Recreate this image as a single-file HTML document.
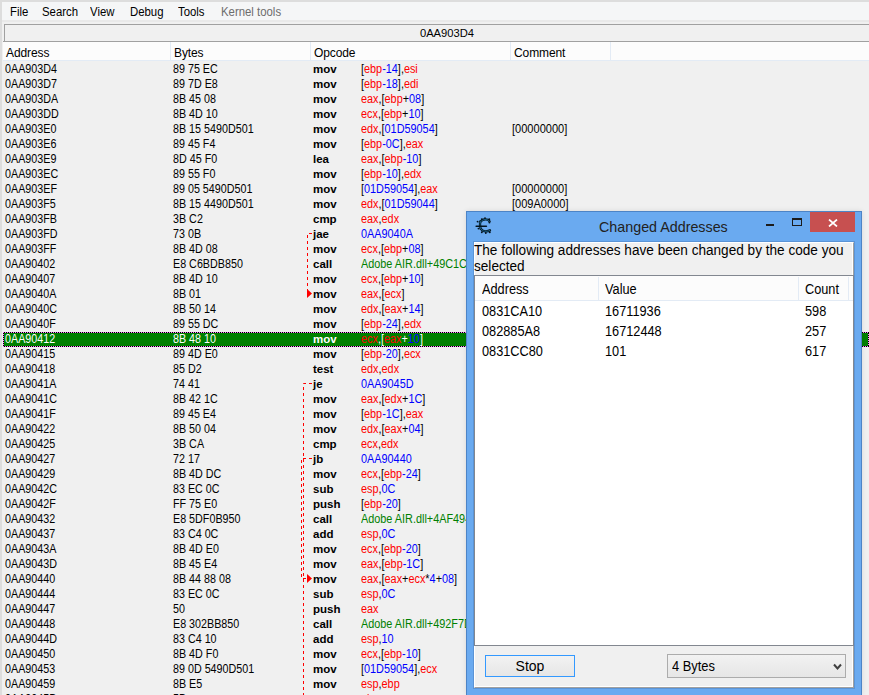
<!DOCTYPE html>
<html><head><meta charset="utf-8">
<style>
*{box-sizing:border-box}
html,body{margin:0;padding:0}
body{width:869px;height:695px;overflow:hidden;position:relative;background:#f0f0f0;font-family:"Liberation Sans",sans-serif;}
.abs{position:absolute}
#frameL{left:0;top:0;width:2px;height:695px;background:#dddddd}
#frameT{left:0;top:0;width:869px;height:2px;background:#dddddd}
#menu{left:2px;top:2px;width:867px;height:18px;background:#f5f6f7}
#menu span{position:absolute;top:2px;font-size:12.5px;line-height:16px;color:#000;transform:scaleX(0.91);transform-origin:0 0}
#menu span.dis{color:#6d6d6d}
#mline{left:2px;top:20px;width:867px;height:2px;background:#e9e9e9}
#edit{left:4px;top:24px;width:865px;height:17px;border-top:1px solid #a0a0a0;border-left:1px solid #a0a0a0;background:#f0f0f0}
#editb{left:3px;top:41px;width:866px;height:1px;background:#a0a0a0}
#edittxt{left:0;top:26px;width:869px;text-align:center;padding-left:25px;font-size:11.2px;line-height:14px;color:#000}
#hdr{left:3px;top:42px;width:866px;height:19px;background:#fcfcfc;border-bottom:1px solid #e3ebf5}
#hdr span{position:absolute;top:4px;font-size:12px;line-height:14px;color:#000;letter-spacing:-0.1px}
.hsep{position:absolute;top:0;width:1px;height:19px;background:#e3ebf5}
.row{position:absolute;left:3px;width:866px;height:15px;font-size:12px;line-height:15px;color:#000;white-space:nowrap}
.row span{position:absolute;top:0px}
.ca{left:2px;transform:scaleX(0.895);transform-origin:0 0}
.cb{left:170px;transform:scaleX(0.895);transform-origin:0 0}
.co{left:310px;font-weight:bold;font-size:11.5px}
.cp{left:358px;transform:scaleX(0.905);transform-origin:0 0}
.cc{left:509px;transform:scaleX(0.92);transform-origin:0 0}
b{font-weight:normal}
.r{color:#ff0000}.n{color:#0000ff}.g{color:#008000}.k{color:#000}
.sel{background:#008000;color:#fff}
.sel::before{content:"";position:absolute;left:0;top:0;right:0;bottom:0;background:repeating-linear-gradient(90deg,#ff80ff 0 1px,#000 1px 2px) left top/100% 1px no-repeat,repeating-linear-gradient(90deg,#ff80ff 0 1px,#000 1px 2px) left bottom/100% 1px no-repeat,repeating-linear-gradient(180deg,#ff80ff 0 1px,#000 1px 2px) left top/1px 100% no-repeat,repeating-linear-gradient(180deg,#ff80ff 0 1px,#000 1px 2px) right top/1px 100% no-repeat}
.sel .k{color:#fff}
#jumps{left:0;top:0}
/* dialog */
#dlg{left:466px;top:211px;width:396px;height:484px;background:#6aaaf0;border:1px solid #4d84c6;border-bottom:none;box-shadow:0 0 5px rgba(0,0,0,0.10)}
#dlgtitle{left:599px;top:218px;font-size:14.3px;line-height:18px;color:#222}
#close{left:810px;top:212px;width:45px;height:20px;background:#c75050}
#client{left:474px;top:242px;width:380px;height:446px;background:#f0f0f0;border-left:1px solid #fff;border-top:1px solid #fff;border-right:1px solid #a0a0a0;border-bottom:1px solid #a0a0a0;box-shadow:0 0 0 1px #5b94d6, inset -1px -1px 0 #fff}
#msg{left:474px;top:242px;width:392px;font-size:14px;line-height:16px;transform:scaleX(0.971);transform-origin:0 0;color:#000}
#lv{left:474px;top:275px;width:380px;height:371px;background:#fff;border:1px solid #828790;border-right:1px solid #828790}
#lvh{left:475px;top:276px;width:378px;height:25px;background:#fcfcfc;border-bottom:1px solid #e3ebf5}
#lvh span, .lr span{position:absolute;font-size:14px;line-height:15px;color:#000;transform:scaleX(0.91);transform-origin:0 0}
.lr{position:absolute;left:475px;width:378px;height:20px}
#stop{left:485px;top:655px;width:90px;height:22px;border:1px solid #3399ff;background:linear-gradient(#f2f2f2,#e6e6e6);font-size:14px;line-height:20px;text-align:center;color:#000}
#combo{left:667px;top:654px;width:179px;height:24px;border:1px solid #acacac;background:linear-gradient(#f2f2f2,#e6e6e6);font-size:14px;line-height:22px;color:#000;padding-left:3.5px}
</style></head><body>
<div class="abs" id="frameL"></div><div class="abs" id="frameT"></div>
<div class="abs" id="menu">
<span style="left:7.5px">File</span>
<span style="left:39.5px">Search</span>
<span style="left:88px">View</span>
<span style="left:127.5px">Debug</span>
<span style="left:176px">Tools</span>
<span class="dis" style="left:219px">Kernel tools</span>
</div>
<div class="abs" id="mline"></div>
<div class="abs" id="edit"></div>
<div class="abs" id="editb"></div>
<div class="abs" id="edittxt">0AA903D4</div>
<div class="abs" id="hdr">
<span style="left:3px">Address</span>
<div class="hsep" style="left:167px"></div>
<span style="left:171px">Bytes</span>
<div class="hsep" style="left:307px"></div>
<span style="left:311px">Opcode</span>
<div class="hsep" style="left:507px"></div>
<span style="left:511px">Comment</span>
<div class="hsep" style="left:607px"></div>
</div>
<div class="row" style="top:62px"><span class="ca">0AA903D4</span><span class="cb">89 75 EC</span><span class="co">mov</span><span class="cp"><b class="k">[</b><b class="r">ebp</b><b class="n">-14</b><b class="k">]</b><b class="k">,</b><b class="r">esi</b></span></div>
<div class="row" style="top:77px"><span class="ca">0AA903D7</span><span class="cb">89 7D E8</span><span class="co">mov</span><span class="cp"><b class="k">[</b><b class="r">ebp</b><b class="n">-18</b><b class="k">]</b><b class="k">,</b><b class="r">edi</b></span></div>
<div class="row" style="top:92px"><span class="ca">0AA903DA</span><span class="cb">8B 45 08</span><span class="co">mov</span><span class="cp"><b class="r">eax</b><b class="k">,</b><b class="k">[</b><b class="r">ebp</b><b class="k">+</b><b class="n">08</b><b class="k">]</b></span></div>
<div class="row" style="top:107px"><span class="ca">0AA903DD</span><span class="cb">8B 4D 10</span><span class="co">mov</span><span class="cp"><b class="r">ecx</b><b class="k">,</b><b class="k">[</b><b class="r">ebp</b><b class="k">+</b><b class="n">10</b><b class="k">]</b></span></div>
<div class="row" style="top:122px"><span class="ca">0AA903E0</span><span class="cb">8B 15 5490D501</span><span class="co">mov</span><span class="cp"><b class="r">edx</b><b class="k">,</b><b class="k">[</b><b class="n">01D59054</b><b class="k">]</b></span><span class="cc">[00000000]</span></div>
<div class="row" style="top:137px"><span class="ca">0AA903E6</span><span class="cb">89 45 F4</span><span class="co">mov</span><span class="cp"><b class="k">[</b><b class="r">ebp</b><b class="n">-0C</b><b class="k">]</b><b class="k">,</b><b class="r">eax</b></span></div>
<div class="row" style="top:152px"><span class="ca">0AA903E9</span><span class="cb">8D 45 F0</span><span class="co">lea</span><span class="cp"><b class="r">eax</b><b class="k">,</b><b class="k">[</b><b class="r">ebp</b><b class="n">-10</b><b class="k">]</b></span></div>
<div class="row" style="top:167px"><span class="ca">0AA903EC</span><span class="cb">89 55 F0</span><span class="co">mov</span><span class="cp"><b class="k">[</b><b class="r">ebp</b><b class="n">-10</b><b class="k">]</b><b class="k">,</b><b class="r">edx</b></span></div>
<div class="row" style="top:182px"><span class="ca">0AA903EF</span><span class="cb">89 05 5490D501</span><span class="co">mov</span><span class="cp"><b class="k">[</b><b class="n">01D59054</b><b class="k">]</b><b class="k">,</b><b class="r">eax</b></span><span class="cc">[00000000]</span></div>
<div class="row" style="top:197px"><span class="ca">0AA903F5</span><span class="cb">8B 15 4490D501</span><span class="co">mov</span><span class="cp"><b class="r">edx</b><b class="k">,</b><b class="k">[</b><b class="n">01D59044</b><b class="k">]</b></span><span class="cc">[009A0000]</span></div>
<div class="row" style="top:212px"><span class="ca">0AA903FB</span><span class="cb">3B C2</span><span class="co">cmp</span><span class="cp"><b class="r">eax</b><b class="k">,</b><b class="r">edx</b></span></div>
<div class="row" style="top:227px"><span class="ca">0AA903FD</span><span class="cb">73 0B</span><span class="co">jae</span><span class="cp"><b class="n">0AA9040A</b></span></div>
<div class="row" style="top:242px"><span class="ca">0AA903FF</span><span class="cb">8B 4D 08</span><span class="co">mov</span><span class="cp"><b class="r">ecx</b><b class="k">,</b><b class="k">[</b><b class="r">ebp</b><b class="k">+</b><b class="n">08</b><b class="k">]</b></span></div>
<div class="row" style="top:257px"><span class="ca">0AA90402</span><span class="cb">E8 C6BDB850</span><span class="co">call</span><span class="cp"><b class="g">Adobe AIR.dll+49C1C0</b></span></div>
<div class="row" style="top:272px"><span class="ca">0AA90407</span><span class="cb">8B 4D 10</span><span class="co">mov</span><span class="cp"><b class="r">ecx</b><b class="k">,</b><b class="k">[</b><b class="r">ebp</b><b class="k">+</b><b class="n">10</b><b class="k">]</b></span></div>
<div class="row" style="top:287px"><span class="ca">0AA9040A</span><span class="cb">8B 01</span><span class="co">mov</span><span class="cp"><b class="r">eax</b><b class="k">,</b><b class="k">[</b><b class="r">ecx</b><b class="k">]</b></span></div>
<div class="row" style="top:302px"><span class="ca">0AA9040C</span><span class="cb">8B 50 14</span><span class="co">mov</span><span class="cp"><b class="r">edx</b><b class="k">,</b><b class="k">[</b><b class="r">eax</b><b class="k">+</b><b class="n">14</b><b class="k">]</b></span></div>
<div class="row" style="top:317px"><span class="ca">0AA9040F</span><span class="cb">89 55 DC</span><span class="co">mov</span><span class="cp"><b class="k">[</b><b class="r">ebp</b><b class="n">-24</b><b class="k">]</b><b class="k">,</b><b class="r">edx</b></span></div>
<div class="row sel" style="top:332px"><span class="ca">0AA90412</span><span class="cb">8B 48 10</span><span class="co">mov</span><span class="cp"><b class="r">ecx</b><b class="k">,</b><b class="k">[</b><b class="r">eax</b><b class="k">+</b><b class="n">10</b><b class="k">]</b></span></div>
<div class="row" style="top:347px"><span class="ca">0AA90415</span><span class="cb">89 4D E0</span><span class="co">mov</span><span class="cp"><b class="k">[</b><b class="r">ebp</b><b class="n">-20</b><b class="k">]</b><b class="k">,</b><b class="r">ecx</b></span></div>
<div class="row" style="top:362px"><span class="ca">0AA90418</span><span class="cb">85 D2</span><span class="co">test</span><span class="cp"><b class="r">edx</b><b class="k">,</b><b class="r">edx</b></span></div>
<div class="row" style="top:377px"><span class="ca">0AA9041A</span><span class="cb">74 41</span><span class="co">je</span><span class="cp"><b class="n">0AA9045D</b></span></div>
<div class="row" style="top:392px"><span class="ca">0AA9041C</span><span class="cb">8B 42 1C</span><span class="co">mov</span><span class="cp"><b class="r">eax</b><b class="k">,</b><b class="k">[</b><b class="r">edx</b><b class="k">+</b><b class="n">1C</b><b class="k">]</b></span></div>
<div class="row" style="top:407px"><span class="ca">0AA9041F</span><span class="cb">89 45 E4</span><span class="co">mov</span><span class="cp"><b class="k">[</b><b class="r">ebp</b><b class="n">-1C</b><b class="k">]</b><b class="k">,</b><b class="r">eax</b></span></div>
<div class="row" style="top:422px"><span class="ca">0AA90422</span><span class="cb">8B 50 04</span><span class="co">mov</span><span class="cp"><b class="r">edx</b><b class="k">,</b><b class="k">[</b><b class="r">eax</b><b class="k">+</b><b class="n">04</b><b class="k">]</b></span></div>
<div class="row" style="top:437px"><span class="ca">0AA90425</span><span class="cb">3B CA</span><span class="co">cmp</span><span class="cp"><b class="r">ecx</b><b class="k">,</b><b class="r">edx</b></span></div>
<div class="row" style="top:452px"><span class="ca">0AA90427</span><span class="cb">72 17</span><span class="co">jb</span><span class="cp"><b class="n">0AA90440</b></span></div>
<div class="row" style="top:467px"><span class="ca">0AA90429</span><span class="cb">8B 4D DC</span><span class="co">mov</span><span class="cp"><b class="r">ecx</b><b class="k">,</b><b class="k">[</b><b class="r">ebp</b><b class="n">-24</b><b class="k">]</b></span></div>
<div class="row" style="top:482px"><span class="ca">0AA9042C</span><span class="cb">83 EC 0C</span><span class="co">sub</span><span class="cp"><b class="r">esp</b><b class="k">,</b><b class="n">0C</b></span></div>
<div class="row" style="top:497px"><span class="ca">0AA9042F</span><span class="cb">FF 75 E0</span><span class="co">push</span><span class="cp"><b class="k">[</b><b class="r">ebp</b><b class="n">-20</b><b class="k">]</b></span></div>
<div class="row" style="top:512px"><span class="ca">0AA90432</span><span class="cb">E8 5DF0B950</span><span class="co">call</span><span class="cp"><b class="g">Adobe AIR.dll+4AF494</b></span></div>
<div class="row" style="top:527px"><span class="ca">0AA90437</span><span class="cb">83 C4 0C</span><span class="co">add</span><span class="cp"><b class="r">esp</b><b class="k">,</b><b class="n">0C</b></span></div>
<div class="row" style="top:542px"><span class="ca">0AA9043A</span><span class="cb">8B 4D E0</span><span class="co">mov</span><span class="cp"><b class="r">ecx</b><b class="k">,</b><b class="k">[</b><b class="r">ebp</b><b class="n">-20</b><b class="k">]</b></span></div>
<div class="row" style="top:557px"><span class="ca">0AA9043D</span><span class="cb">8B 45 E4</span><span class="co">mov</span><span class="cp"><b class="r">eax</b><b class="k">,</b><b class="k">[</b><b class="r">ebp</b><b class="n">-1C</b><b class="k">]</b></span></div>
<div class="row" style="top:572px"><span class="ca">0AA90440</span><span class="cb">8B 44 88 08</span><span class="co">mov</span><span class="cp"><b class="r">eax</b><b class="k">,</b><b class="k">[</b><b class="r">eax</b><b class="k">+</b><b class="r">ecx</b><b class="k">*</b><b class="n">4</b><b class="k">+</b><b class="n">08</b><b class="k">]</b></span></div>
<div class="row" style="top:587px"><span class="ca">0AA90444</span><span class="cb">83 EC 0C</span><span class="co">sub</span><span class="cp"><b class="r">esp</b><b class="k">,</b><b class="n">0C</b></span></div>
<div class="row" style="top:602px"><span class="ca">0AA90447</span><span class="cb">50</span><span class="co">push</span><span class="cp"><b class="r">eax</b></span></div>
<div class="row" style="top:617px"><span class="ca">0AA90448</span><span class="cb">E8 302BB850</span><span class="co">call</span><span class="cp"><b class="g">Adobe AIR.dll+492F7D</b></span></div>
<div class="row" style="top:632px"><span class="ca">0AA9044D</span><span class="cb">83 C4 10</span><span class="co">add</span><span class="cp"><b class="r">esp</b><b class="k">,</b><b class="n">10</b></span></div>
<div class="row" style="top:647px"><span class="ca">0AA90450</span><span class="cb">8B 4D F0</span><span class="co">mov</span><span class="cp"><b class="r">ecx</b><b class="k">,</b><b class="k">[</b><b class="r">ebp</b><b class="n">-10</b><b class="k">]</b></span></div>
<div class="row" style="top:662px"><span class="ca">0AA90453</span><span class="cb">89 0D 5490D501</span><span class="co">mov</span><span class="cp"><b class="k">[</b><b class="n">01D59054</b><b class="k">]</b><b class="k">,</b><b class="r">ecx</b></span></div>
<div class="row" style="top:677px"><span class="ca">0AA90459</span><span class="cb">8B E5</span><span class="co">mov</span><span class="cp"><b class="r">esp</b><b class="k">,</b><b class="r">ebp</b></span></div>
<div class="row" style="top:692px"><span class="ca">0AA9045B</span><span class="cb">5D</span><span class="co">pop</span><span class="cp"><b class="r">ebp</b></span></div>
<svg class="abs" id="jumps" width="869" height="695" style="left:0;top:0">
<g fill="none" stroke="#ff0000" stroke-width="1" stroke-dasharray="3 3">
<path d="M312 233.5 H307.5 V292"/>
<path d="M312 383.5 H303.5 V695"/>
<path d="M312 458.5 H301.5 V578.5 H306"/>
</g>
<path d="M307 289 L312 293.5 L307 298 Z" fill="#ff0000"/>
<path d="M307 574 L312 578.5 L307 583 Z" fill="#ff0000"/>
</svg>
<div class="abs" id="dlg"></div>
<div class="abs" id="dlgtitle">Changed Addresses</div>
<div class="abs" id="close"></div>
<div class="abs" id="client"></div>
<div class="abs" id="msg">The following addresses have been changed by the code you selected</div>
<div class="abs" id="lv"></div>
<div class="abs" id="lvh">
<span style="left:7px;top:6px">Address</span>
<span style="left:130px;top:6px">Value</span>
<span style="left:330px;top:6px">Count</span>
</div>
<div class="lr" style="top:301px"><span style="left:7px;top:3px">0831CA10</span><span style="left:130px;top:3px">16711936</span><span style="left:330px;top:3px">598</span></div>
<div class="lr" style="top:321px"><span style="left:7px;top:3px">082885A8</span><span style="left:130px;top:3px">16712448</span><span style="left:330px;top:3px">257</span></div>
<div class="lr" style="top:341px"><span style="left:7px;top:3px">0831CC80</span><span style="left:130px;top:3px">101</span><span style="left:330px;top:3px">617</span></div>
<svg class="abs" style="left:470px;top:212px" width="30" height="28" viewBox="0 0 30 28">
<g fill="none" stroke-linecap="round">
<path d="M9.9 10.6 Q11.6 7.6 15 7.4 Q18.3 7.3 19.6 9.3 M10.2 9.5 Q9.6 13 10.6 16.8 Q13 19.6 16 19.4 Q18.6 19.3 20 18.3" stroke="#04141e" stroke-width="2.3"/>
<path d="M9.9 10.6 Q11.6 7.6 15 7.4 Q18.3 7.3 19.6 9.3 M10.2 9.5 Q9.6 13 10.6 16.8 Q13 19.6 16 19.4 Q18.6 19.3 20 18.3" stroke="#1b6e9c" stroke-width="0.8"/>
</g>
<g fill="#04141e"><circle cx="7.6" cy="9.6" r="0.95"/><circle cx="11.8" cy="7.1" r="0.95"/><circle cx="15" cy="6.1" r="0.95"/><circle cx="19.3" cy="7.3" r="0.95"/><circle cx="19.4" cy="10.6" r="0.95"/><circle cx="8.5" cy="16.6" r="0.95"/><circle cx="11.8" cy="20.3" r="0.95"/><circle cx="15.8" cy="21" r="0.95"/><circle cx="19.8" cy="20.2" r="0.95"/></g>
<path d="M6.2 14.2 H16.4" stroke="#04141e" stroke-width="1.6" stroke-linecap="round"/>
</svg>
<div class="abs" style="left:766px;top:224px;width:8px;height:2px;background:#1c1c1c"></div>
<div class="abs" style="left:792px;top:218px;width:10px;height:8px;border:1px solid #1c1c1c;border-top-width:2px"></div>
<svg class="abs" style="left:828px;top:219px" width="10" height="8" viewBox="0 0 10 8"><path d="M1 0.5 L9 7.5 M9 0.5 L1 7.5" stroke="#fff" stroke-width="1.7"/></svg>
<div class="abs" style="left:598px;top:277px;width:1px;height:23px;background:#e3ebf5"></div>
<div class="abs" style="left:798px;top:277px;width:1px;height:23px;background:#e3ebf5"></div>
<div class="abs" style="left:848px;top:277px;width:1px;height:23px;background:#e3ebf5"></div>
<div class="abs" id="stop">Stop</div>
<div class="abs" id="combo"><span style="display:inline-block;transform:scaleX(0.92);transform-origin:0 0">4 Bytes</span></div>
<svg class="abs" style="left:833px;top:663px" width="9" height="8" viewBox="0 0 9 8"><path d="M1 1.5 L4.5 5.5 L8 1.5" fill="none" stroke="#404040" stroke-width="2"/></svg>
</body></html>
